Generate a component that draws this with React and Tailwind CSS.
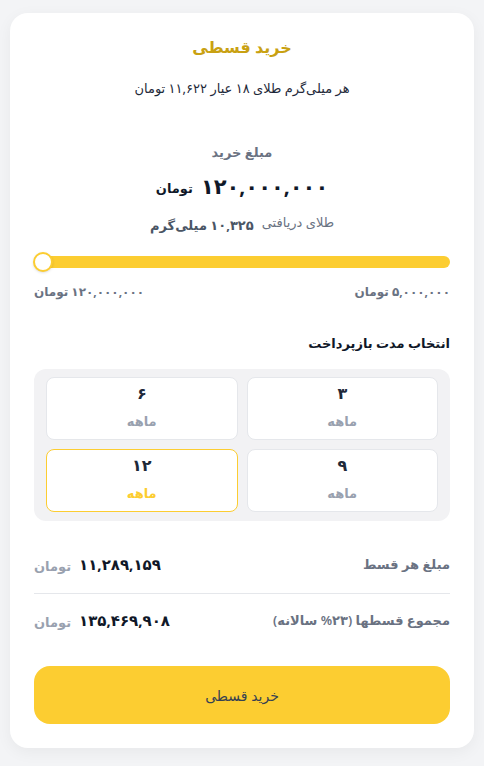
import React from 'react';

const durations = [
    { n: '۳', active: false },
    { n: '۶', active: false },
    { n: '۹', active: false },
    { n: '۱۲', active: true },
];

const App = () => {
    return (
        <div dir="rtl" className="min-h-screen bg-[#f3f4f6] px-[10px] pt-[13px] pb-[18px]" style={{ fontFamily: '"Noto Sans", "DejaVu Sans", sans-serif' }}>
            <div className="bg-white rounded-[18px] shadow-[0_4px_16px_rgba(0,0,0,0.05)] px-6 pt-[22px] pb-6">
                <h1 className="text-center text-[16px] leading-[24px] font-bold text-[#c9a112]">خرید قسطی</h1>
                <p className="text-center text-[13px] leading-[20px] text-gray-800 mt-[19px]">هر میلی‌گرم طلای ۱۸ عیار ۱۱,۶۲۲ تومان</p>

                <div className="mt-[44px] text-center">
                    <p className="text-[13px] leading-[20px] font-semibold text-gray-500">مبلغ خرید</p>
                    <div className="mt-[10px] h-[28px] flex items-center justify-center gap-2">
                        <span className="text-[21px] leading-[28px] font-bold text-gray-900">۱۲۰,۰۰۰,۰۰۰</span>
                        <span className="text-[13px] leading-[20px] font-bold text-gray-900 mt-[4px]">تومان</span>
                    </div>
                    <div className="mt-[13px] h-[20px] flex items-center justify-center gap-2">
                        <span className="text-[13px] leading-[20px] text-gray-500 -mt-[3px]">طلای دریافتی</span>
                        <span className="text-[13px] leading-[20px] font-bold text-gray-600 mt-[4px]">۱۰,۳۲۵ میلی‌گرم</span>
                    </div>
                </div>

                <div className="mt-[23px] relative h-[12px] rounded-full bg-[#fccd31]">
                    <div className="absolute left-[-1px] top-1/2 -translate-y-1/2 w-[20px] h-[20px] rounded-full bg-white border-2 border-[#fccd31] shadow"></div>
                </div>
                <div className="mt-[16px] flex justify-between text-[12px] leading-[16px] font-bold text-gray-500">
                    <span>۵,۰۰۰,۰۰۰ تومان</span>
                    <span>۱۲۰,۰۰۰,۰۰۰ تومان</span>
                </div>

                <h2 className="mt-[33px] text-[13px] leading-[20px] font-bold text-gray-900">انتخاب مدت بازپرداخت</h2>
                <div className="mt-[16px] bg-[#f2f2f4] rounded-xl px-[12px] pt-[8px] pb-[9px] grid grid-cols-2 gap-[9px]">
                    {durations.map((d) => (
                        <div
                            key={d.n}
                            className={`h-[63px] rounded-lg bg-white border flex flex-col items-center pt-[5px] ${d.active ? 'border-[#fccd31]' : 'border-gray-200'}`}
                        >
                            <span className="text-[16px] leading-[20px] font-semibold text-gray-800">{d.n}</span>
                            <span className={`mt-[8px] text-[13px] leading-[20px] font-semibold ${d.active ? 'text-[#fccd31]' : 'text-gray-400'}`}>ماهه</span>
                        </div>
                    ))}
                </div>

                <div className="mt-[31px] h-[24px] flex items-center justify-between">
                    <span className="text-[13px] leading-[20px] font-semibold text-gray-500">مبلغ هر قسط</span>
                    <span className="flex items-center gap-2">
                        <span className="text-[15px] leading-[24px] font-bold text-gray-900">۱۱,۲۸۹,۱۵۹</span>
                        <span className="text-[13px] leading-[20px] font-semibold text-gray-400 mt-[3px]">تومان</span>
                    </span>
                </div>
                <div className="mt-[17px] border-t border-gray-200"></div>
                <div className="mt-[14px] h-[24px] flex items-center justify-between">
                    <span className="text-[13px] leading-[20px] font-semibold text-gray-500">مجموع قسطها (۲۳% سالانه)</span>
                    <span className="flex items-center gap-2">
                        <span className="text-[15px] leading-[24px] font-bold text-gray-900">۱۳۵,۴۶۹,۹۰۸</span>
                        <span className="text-[13px] leading-[20px] font-semibold text-gray-400 mt-[3px]">تومان</span>
                    </span>
                </div>

                <button className="mt-[34px] w-full h-[58px] rounded-2xl bg-[#fccd31] text-[14px] text-gray-700">خرید قسطی</button>
            </div>
        </div>
    );
};

export default App;
